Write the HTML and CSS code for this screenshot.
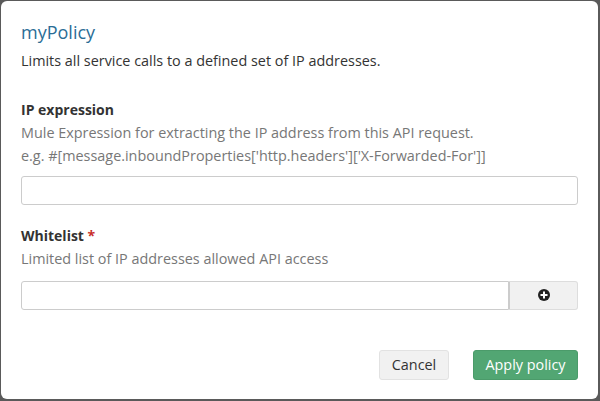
FILE: index.html
```html
<!DOCTYPE html>
<html>
<head>
<meta charset="utf-8">
<link rel="stylesheet" href="styles.css">
</head>
<body>
<div class="modal">
  <div class="header">
    <h1 class="title">myPolicy</h1>
    <p class="desc">Limits all service calls to a defined set of IP addresses.</p>
  </div>
  <div class="field field-first">
    <div class="label">IP expression</div>
    <div class="help">Mule Expression for extracting the IP address from this API request.<br>e.g. #[message.inboundProperties['http.headers']['X-Forwarded-For']]</div>
    <div class="input"></div>
  </div>
  <div class="field">
    <div class="label">Whitelist <span class="req">*</span></div>
    <div class="help">Limited list of IP addresses allowed API access</div>
    <div class="group">
      <div class="input grow"></div>
      <div class="addon">
        <svg width="12" height="12" viewBox="0 0 12 12"><circle cx="6" cy="6" r="6" fill="#222"/><rect x="5" y="2.5" width="2" height="7" fill="#fff"/><rect x="2.5" y="5" width="7" height="2" fill="#fff"/></svg>
      </div>
    </div>
  </div>
  <div class="footer">
    <div class="btn btn-cancel">Cancel</div>
    <div class="btn btn-apply">Apply policy</div>
  </div>
</div>
</body>
</html>
```
FILE: styles.css
```css
html, body {
  margin: 0;
  padding: 0;
  height: 100%;
}
body {
  background: #5a5a5a;
  font-family: "Open Sans", "DejaVu Sans", sans-serif;
  color: #333;
  overflow: hidden;
}
.modal {
  margin: 1px 2px 2px 1px;
  height: calc(100vh - 3px);
  box-sizing: border-box;
  background: #fff;
  border-radius: 6px;
  padding: 19px 20px 0 20px;
  display: flex;
  flex-direction: column;
}
.title {
  margin: 0;
  font-size: 18px;
  line-height: 24px;
  font-weight: 400;
  color: #2a6d96;
}
.desc {
  margin: 7px 0 0 0;
  font-size: 14.4px;
  line-height: 20px;
}
.field {
  margin-top: 21px;
}
.field-first {
  margin-top: 29px;
}
.label {
  font-size: 14px;
  line-height: 20px;
  font-weight: 700;
  color: #333;
}
.req {
  color: #c9302c;
}
.help {
  margin-top: 2px;
  font-size: 14.4px;
  line-height: 22.5px;
  color: #777;
}
.input {
  margin-top: 9px;
  height: 29px;
  box-sizing: border-box;
  border: 1px solid #ccc;
  border-radius: 3px;
  background: #fff;
}
.group {
  margin-top: 10px;
  display: flex;
  height: 29px;
}
.group .input {
  margin-top: 0;
  height: 29px;
  border-radius: 3px 0 0 3px;
}
.grow {
  flex: 1;
}
.addon {
  width: 69px;
  box-sizing: border-box;
  border: 1px solid #ddd;
  border-left: 1px solid #ccc;
  border-radius: 0 3px 3px 0;
  background: #f1f1f1;
  display: flex;
  align-items: center;
  justify-content: center;
}
.addon svg {
  display: block;
}
.footer {
  margin-top: 40px;
  display: flex;
  justify-content: flex-end;
  gap: 24px;
}
.btn {
  height: 30px;
  box-sizing: border-box;
  border-radius: 3px;
  font-size: 14.4px;
  line-height: 28px;
  padding: 0 10px;
  text-align: center;
}
.btn-cancel {
  background: #f1f1f1;
  border: 1px solid #e2e2e2;
  color: #333;
  width: 70px;
}
.btn-apply {
  background: #52a673;
  border: 1px solid #4b9b6a;
  color: #fff;
  width: 105px;
}
```
